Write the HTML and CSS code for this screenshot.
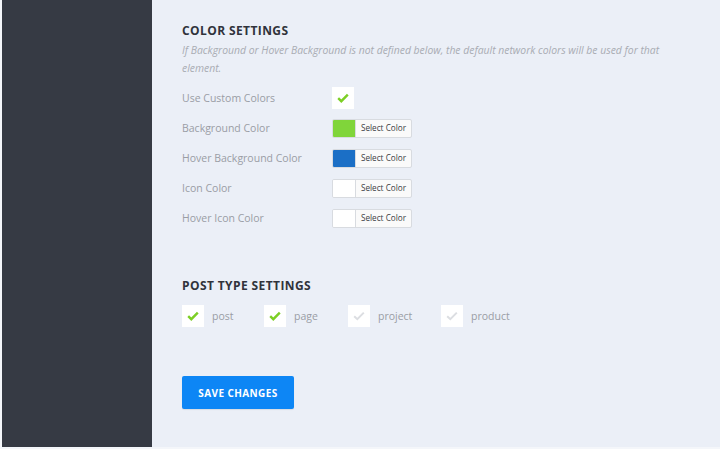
FILE: index.html
```html
<!DOCTYPE html>
<html>
<head>
<meta charset="utf-8">
<link rel="stylesheet" href="styles.css">
</head>
<body>
<div class="page">
  <aside class="sidebar"></aside>
  <main class="main">
    <section class="color-settings">
      <h2 class="heading">COLOR SETTINGS</h2>
      <p class="desc">If Background or Hover Background is not defined below, the default network colors will be used for that element.</p>
      <div class="rows">
        <div class="row">
          <span class="label">Use Custom Colors</span>
          <span class="check on"><svg viewBox="0 0 12 10" width="12" height="10"><path d="M1.2 5.2 L4.3 8.2 L10.8 1.6" fill="none" stroke="currentColor" stroke-width="2.4"/></svg></span>
        </div>
        <div class="row">
          <span class="label">Background Color</span>
          <span class="picker"><span class="swatch green"></span><span class="sel">Select Color</span></span>
        </div>
        <div class="row">
          <span class="label">Hover Background Color</span>
          <span class="picker"><span class="swatch blue"></span><span class="sel">Select Color</span></span>
        </div>
        <div class="row">
          <span class="label">Icon Color</span>
          <span class="picker"><span class="swatch white"></span><span class="sel">Select Color</span></span>
        </div>
        <div class="row">
          <span class="label">Hover Icon Color</span>
          <span class="picker"><span class="swatch white"></span><span class="sel">Select Color</span></span>
        </div>
      </div>
    </section>
    <section class="post-types">
      <h2 class="heading">POST TYPE SETTINGS</h2>
      <div class="types">
        <span class="type t-post"><span class="check on"><svg viewBox="0 0 12 10" width="12" height="10"><path d="M1.2 5.2 L4.3 8.2 L10.8 1.6" fill="none" stroke="currentColor" stroke-width="2.4"/></svg></span><span class="tlabel">post</span></span>
        <span class="type t-page"><span class="check on"><svg viewBox="0 0 12 10" width="12" height="10"><path d="M1.2 5.2 L4.3 8.2 L10.8 1.6" fill="none" stroke="currentColor" stroke-width="2.4"/></svg></span><span class="tlabel">page</span></span>
        <span class="type t-project"><span class="check off"><svg viewBox="0 0 12 10" width="12" height="10"><path d="M1.2 5.2 L4.3 8.2 L10.8 1.6" fill="none" stroke="currentColor" stroke-width="2"/></svg></span><span class="tlabel">project</span></span>
        <span class="type"><span class="check off"><svg viewBox="0 0 12 10" width="12" height="10"><path d="M1.2 5.2 L4.3 8.2 L10.8 1.6" fill="none" stroke="currentColor" stroke-width="2"/></svg></span><span class="tlabel">product</span></span>
      </div>
    </section>
    <button class="save">SAVE CHANGES</button>
  </main>
</div>
</body>
</html>
```

FILE: styles.css
```css
* { box-sizing: border-box; }
html, body { margin: 0; padding: 0; }
body {
  background: #f4f6fa;
  font-family: "Open Sans", "Noto Sans", sans-serif;
  width: 720px;
  height: 449px;
  overflow: hidden;
}
.page {
  display: flex;
  height: 447px;
  margin-left: 2px;
}
.sidebar {
  width: 150px;
  flex: none;
  background: #363a44;
}
.main {
  flex: 1;
  background: #ebeff7;
  padding: 22px 30px 0 30px;
}
.heading {
  margin: 0;
  font-size: 12px;
  font-weight: 700;
  color: #30333b;
  letter-spacing: 0.4px;
  line-height: 18px;
}
.desc {
  margin: 1px 0 0 0;
  font-size: 10.4px;
  font-style: italic;
  color: #a9acb3;
  line-height: 18px;
  width: 500px;
}
.rows {
  margin-top: 6px;
  display: flex;
  flex-direction: column;
}
.row {
  display: flex;
  align-items: center;
  height: 30px;
}
.label {
  width: 150px;
  font-size: 10.5px;
  color: #9a9da5;
}
.check {
  width: 22px;
  height: 22px;
  background: #ffffff;
  display: flex;
  align-items: center;
  justify-content: center;
  flex: none;
}
.check.on { color: #7ccf25; }
.check.off { color: #dcdee2; }
.picker {
  display: flex;
  height: 19px;
  width: 80px;
  border: 1px solid #d8dbe0;
  border-radius: 2px;
  background: #fafafa;
  overflow: hidden;
}
.swatch {
  width: 23px;
  flex: none;
  border-right: 1px solid #d8dbe0;
}
.swatch.green { background: #80d53a; }
.swatch.blue { background: #1b6fc6; }
.swatch.white { background: #ffffff; }
.sel {
  flex: 1;
  font-size: 8.2px;
  color: #3a3d44;
  display: flex;
  align-items: center;
  justify-content: center;
  line-height: 1;
}
.post-types {
  margin-top: 44px;
}
.types {
  display: flex;
  margin-top: 10px;
}
.type {
  display: flex;
  align-items: center;
  width: 82px;
}
.t-post { width: 82px; }
.t-page { width: 84px; }
.t-project { width: 93px; }
.tlabel {
  margin-left: 8px;
  font-size: 10.5px;
  color: #9a9da5;
}
.save {
  margin-top: 49px;
  width: 112px;
  height: 33px;
  border: none;
  border-radius: 2px;
  background: #0d86f5;
  color: #ffffff;
  font-family: "Open Sans", "Noto Sans", sans-serif;
  font-weight: 700;
  font-size: 10px;
  letter-spacing: 0.4px;
  padding: 0;
  box-shadow: 0 1px 1px rgba(0,0,0,0.08);
}
```
